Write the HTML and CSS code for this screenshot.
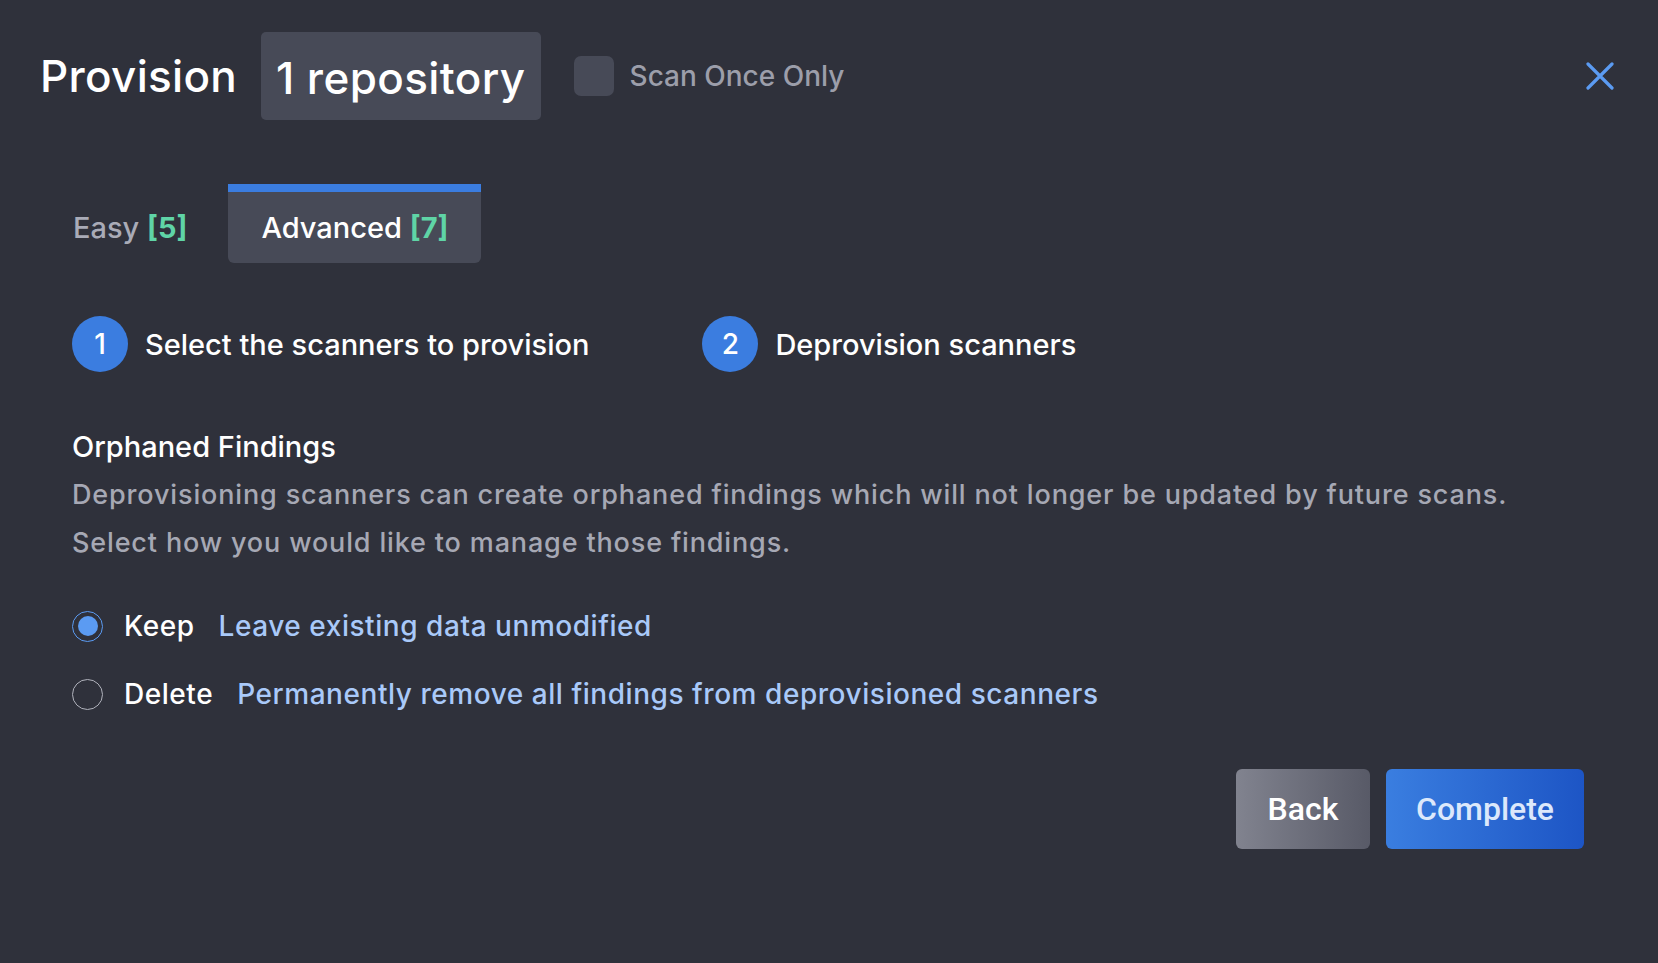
FILE: index.html
```html
<!DOCTYPE html>
<html lang="en">
<head>
  <meta charset="UTF-8">
  <meta name="viewport" content="width=device-width, initial-scale=1.0">
  <title>Provision</title>
  <link rel="stylesheet" href="styles.css">
</head>
<body>
  <div class="modal">
    <div class="header">
      <h1 class="title">Provision</h1>
      <span class="count">1 repository</span>
      <label class="check">
        <span class="box"></span>
        <span class="check-label">Scan Once Only</span>
      </label>
      <button class="close" type="button" aria-label="Close">
        <svg width="28" height="28" viewBox="0 0 28 28">
          <path d="M2 2L26 26M26 2L2 26" stroke="#5b9bf2" stroke-width="3.2" stroke-linecap="round" fill="none"/>
        </svg>
      </button>
    </div>

    <div class="tabs">
      <div class="tab">Easy <span class="num">[5]</span></div>
      <div class="tab active">Advanced <span class="num">[7]</span></div>
    </div>

    <div class="content">
      <div class="steps">
        <div class="step"><span class="dot">1</span>Select the scanners to provision</div>
        <div class="step"><span class="dot">2</span>Deprovision scanners</div>
      </div>

      <h2 class="section-title">Orphaned Findings</h2>
      <p class="desc">Deprovisioning scanners can create orphaned findings which will not longer be updated by future scans.<br>Select how you would like to manage those findings.</p>

      <div class="options">
        <label class="option">
          <span class="radio checked"></span>
          <span class="opt-name">Keep</span>
          <span class="opt-text">Leave existing data unmodified</span>
        </label>
        <label class="option">
          <span class="radio"></span>
          <span class="opt-name">Delete</span>
          <span class="opt-text">Permanently remove all findings from deprovisioned scanners</span>
        </label>
      </div>

      <div class="actions">
        <button class="btn back" type="button">Back</button>
        <button class="btn complete" type="button">Complete</button>
      </div>
    </div>
  </div>
</body>
</html>
```

FILE: styles.css
```css
html, body {
  margin: 0;
  padding: 0;
  background-color: #2f313b;
  height: 100%;
}
body {
  font-family: Inter, Roboto, sans-serif;
  color: #fff;
}
.modal {
  padding: 32px 44px 0 40px;
}
.header {
  display: flex;
  align-items: center;
  height: 88px;
}
.title {
  margin: 0;
  font-size: 44px;
  font-weight: 500;
  letter-spacing: 0.3px;
  line-height: 92px;
  color: #fff;
}
.count {
  margin-left: 24px;
  background-color: #474a57;
  border-radius: 5px;
  height: 88px;
  line-height: 92px;
  padding: 0 15px;
  font-size: 44px;
  font-weight: 500;
  letter-spacing: 0.4px;
}
.check {
  display: flex;
  align-items: center;
  margin-left: 33px;
}
.box {
  width: 40px;
  height: 40px;
  border-radius: 7px;
  background-color: #474a57;
}
.check-label {
  margin-left: 16px;
  font-size: 28px;
  font-weight: 500;
  color: #9c9eaa;
}
.close {
  margin-left: auto;
  background: none;
  border: none;
  padding: 0;
  width: 28px;
  height: 28px;
  cursor: pointer;
}
.tabs {
  display: flex;
  gap: 8px;
  margin-top: 64px;
}
.tab {
  padding: 0 33px;
  height: 71px;
  line-height: 71px;
  border-top: 8px solid transparent;
  font-size: 29px;
  font-weight: 500;
  color: #a9abb7;
  border-radius: 0 0 6px 6px;
}
.tab.active {
  background-color: #474a57;
  border-top-color: #3b7de0;
  color: #fff;
}
.num {
  color: #5fd4a6;
  font-weight: 700;
}
.content {
  padding-left: 32px;
}
.steps {
  display: flex;
  gap: 113px;
  margin-top: 53px;
}
.step {
  display: flex;
  align-items: center;
  gap: 17px;
  font-size: 29px;
  font-weight: 500;
}
.dot {
  width: 56px;
  height: 56px;
  border-radius: 50%;
  background-color: #3b7de0;
  display: flex;
  align-items: center;
  justify-content: center;
  font-size: 28px;
}
.section-title {
  margin: 55px 0 0;
  font-size: 29px;
  font-weight: 500;
  line-height: 40px;
}
.desc {
  margin: 4px 0 0;
  font-size: 27px;
  font-weight: 500;
  letter-spacing: 0.85px;
  line-height: 48px;
  color: #a6a8b4;
}
.options {
  margin-top: 43px;
  display: flex;
  flex-direction: column;
  gap: 36px;
}
.option {
  display: flex;
  align-items: center;
  height: 32px;
  font-size: 28px;
  letter-spacing: 0.55px;
}
.radio {
  width: 29px;
  height: 29px;
  border-radius: 50%;
  border: 1.5px solid #b0b2bb;
  box-sizing: content-box;
  position: relative;
}
.radio.checked {
  border-color: #5b9bf2;
}
.radio.checked::after {
  content: "";
  position: absolute;
  left: 4.5px;
  top: 4.5px;
  width: 20px;
  height: 20px;
  border-radius: 50%;
  background-color: #5b9bf2;
}
.opt-name {
  margin-left: 21px;
  font-weight: 500;
  color: #fff;
}
.opt-text {
  margin-left: 24px;
  color: #a9c9f9;
  font-weight: 500;
}
.actions {
  display: flex;
  justify-content: flex-end;
  gap: 16px;
  margin-top: 59px;
  padding-right: 30px;
}
.btn {
  height: 80px;
  border: none;
  border-radius: 6px;
  font-family: Roboto, "Liberation Sans", sans-serif;
  font-size: 32px;
  font-weight: 500;
  cursor: pointer;
}
.back {
  width: 134px;
  background: linear-gradient(90deg, #81838f, #585a67);
  color: #fff;
}
.complete {
  width: 198px;
  background: linear-gradient(90deg, #3a7ee0, #1d55c5);
  color: #dce8fb;
}
```
